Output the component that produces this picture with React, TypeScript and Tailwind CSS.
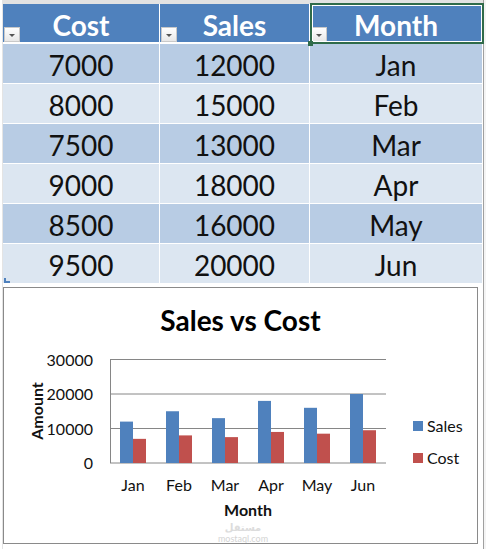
import React from "react";

const rows = [
  { cost: 7000, sales: 12000, month: "Jan" },
  { cost: 8000, sales: 15000, month: "Feb" },
  { cost: 7500, sales: 13000, month: "Mar" },
  { cost: 9000, sales: 18000, month: "Apr" },
  { cost: 8500, sales: 16000, month: "May" },
  { cost: 9500, sales: 20000, month: "Jun" },
];

function FilterButton() {
  return (
    <div className="absolute left-[1px] bottom-0 w-[16px] h-[15px] bg-gradient-to-b from-white to-[#e8e8e8] border border-[#c9c9c9] flex items-center justify-center">
      <div className="w-0 h-0 border-l-[3px] border-r-[3px] border-t-[3px] border-l-transparent border-r-transparent border-t-[#555] mt-[2px]" />
    </div>
  );
}

function HeaderCell({ label, width }: { label: string; width: string }) {
  return (
    <div className={`relative ${width} h-full bg-[#4f81bd] flex items-center justify-center pt-[4px]`}>
      <span className="text-white font-bold text-[28px] leading-none">{label}</span>
      <FilterButton />
    </div>
  );
}

function DataRow({ cost, sales, month, odd }: { cost: number; sales: number; month: string; odd: boolean }) {
  const bg = odd ? "bg-[#b8cce4]" : "bg-[#dce6f1]";
  return (
    <div className="flex h-[39px] gap-px mb-px text-[28px] leading-none text-[#111]">
      <div className={`w-[156px] ${bg} flex items-center justify-center pt-[2px]`}>{cost}</div>
      <div className={`w-[149px] ${bg} flex items-center justify-center pt-[2px]`}>{sales}</div>
      <div className={`w-[172px] ${bg} flex items-center justify-center pt-[2px]`}>{month}</div>
    </div>
  );
}

const y = (v: number) => 463 - v * 0.00345;

function Chart() {
  const gridY = [0, 10000, 20000, 30000];
  return (
    <div className="w-[475px] h-[257px] border border-[#8a8a8a] bg-white flex flex-col">
      <div className="h-[57px] pt-[16px] text-center text-[28px] leading-[32px] font-bold text-black">
        Sales vs Cost
      </div>
      <svg width="473" height="198" viewBox="4 345 473 198" className="block">
        {gridY.map((v) => (
          <g key={v}>
            <line x1="110" x2="386" y1={y(v)} y2={y(v)} stroke="#868686" strokeWidth="1" />
            <text x="93" y={y(v) + 6} textAnchor="end" fontSize="16" fill="#111" fontFamily="Lato">
              {v}
            </text>
          </g>
        ))}
        <line x1="110.5" x2="110.5" y1={y(30000)} y2={y(0)} stroke="#868686" strokeWidth="1" />
        {rows.map((r, i) => {
          const c = 133 + 46 * i;
          return (
            <g key={r.month}>
              <rect x={c - 13} y={y(r.sales)} width="13" height={r.sales * 0.00345} fill="#4f81bd" />
              <rect x={c} y={y(r.cost)} width="13" height={r.cost * 0.00345} fill="#c0504d" />
              <text x={c} y="491" textAnchor="middle" fontSize="16" fill="#111" fontFamily="Lato">
                {r.month}
              </text>
            </g>
          );
        })}
        <text
          x="36"
          y="411"
          transform="rotate(-90 36 411)"
          textAnchor="middle"
          dominantBaseline="central"
          fontSize="16"
          fontWeight="bold"
          fill="#111"
          fontFamily="Lato"
        >
          Amount
        </text>
        <text x="248" y="516" textAnchor="middle" fontSize="16" fontWeight="bold" fill="#111" fontFamily="Lato">
          Month
        </text>
        <text x="243" y="527" textAnchor="middle" dominantBaseline="central" fontSize="10" fill="#dcdcdc" fontWeight="bold" fontFamily="DejaVu Sans">
          مستقل
        </text>
        <text x="243" y="542" textAnchor="middle" fontSize="9" fill="#d4d4d4" fontFamily="Lato">
          mostaql.com
        </text>
        <rect x="413" y="421" width="10" height="10" fill="#4f81bd" />
        <text x="427" y="432" fontSize="16" fill="#111" fontFamily="Lato">
          Sales
        </text>
        <rect x="413" y="453" width="10" height="10" fill="#c0504d" />
        <text x="427" y="464" fontSize="16" fill="#111" fontFamily="Lato">
          Cost
        </text>
      </svg>
    </div>
  );
}

export default function App() {
  return (
    <div className="w-[486px] h-[549px] bg-white flex overflow-hidden font-[Lato,sans-serif]">
      <div className="w-[3px] h-full bg-white border-r border-[#e4e4e4]" />
      <div className="relative w-[480px] h-full flex flex-col">
        <div className="h-[4px] bg-[#e2e2e2]" />
        <div className="flex h-[38px] gap-px">
          <HeaderCell label="Cost" width="w-[156px]" />
          <HeaderCell label="Sales" width="w-[149px]" />
          <HeaderCell label="Month" width="w-[172px]" />
        </div>
        <div className="h-[2px] bg-white" />
        {rows.map((r, i) => (
          <DataRow key={r.month} {...r} odd={i % 2 === 0} />
        ))}
        <div className="h-[3px]" />
        <Chart />
        {/* selected cell */}
        <div className="absolute left-[307px] top-[3px] w-[174px] h-[41px] border-2 border-[#2f6b4a] shadow-[inset_0_0_0_1px_white]" />
        <div className="absolute left-[305px] top-[41px] w-[5px] h-[5px] bg-[#2f6b4a]" />
        {/* table resize handle */}
        <div className="absolute left-[1px] top-[278px] w-[6px] h-[5px] border-l-2 border-b-2 border-[#4f81bd]" />
      </div>
      <div className="w-[3px] h-full bg-[#f4f4f4] border-l border-[#a0a0a0]" />
    </div>
  );
}
